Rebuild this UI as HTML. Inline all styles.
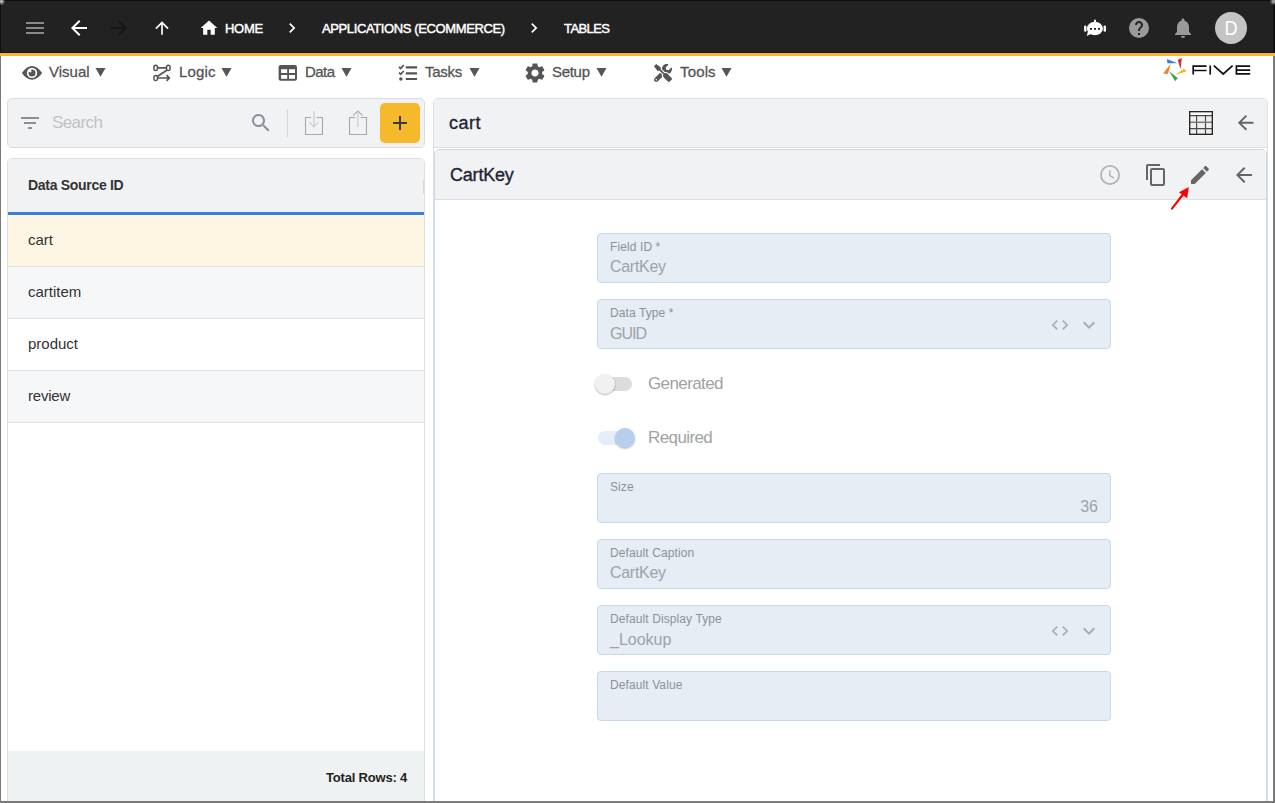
<!DOCTYPE html>
<html><head><meta charset="utf-8">
<style>
*{box-sizing:border-box;margin:0;padding:0}
html,body{width:1275px;height:803px;overflow:hidden;background:#fff;font-family:"Liberation Sans",sans-serif}
.a{position:absolute;white-space:nowrap}
svg.a{overflow:visible}
.crumb{position:absolute;color:#fff;font-size:13px;font-weight:normal;-webkit-text-stroke:0.45px #fff;white-space:nowrap}
.mt{position:absolute;color:#555;font-size:15px;font-weight:normal;-webkit-text-stroke:0.3px #555;white-space:nowrap;letter-spacing:-0.3px}
.row{position:absolute;left:0;width:416px;height:52px;border-bottom:1px solid #e2e2e2}
.rt{position:absolute;left:20px;font-size:15px;color:#333;white-space:nowrap}
.fld{position:absolute;left:597px;width:514px;height:50px;background:#e6edf5;border:1px solid #c7d8ec;border-radius:4px}
.lb{position:absolute;left:12px;font-size:12px;color:#8d9297;white-space:nowrap;letter-spacing:0.1px}
.vl{position:absolute;left:12px;font-size:16px;color:#9ea3a8;white-space:nowrap}
</style></head><body>

<!-- header -->
<div class="a" style="left:0;top:0;width:1275px;height:53px;background:#222"></div>
<div class="a" style="left:0;top:52px;width:1275px;height:1px;background:#151515"></div>
<div class="a" style="left:0;top:53px;width:1275px;height:3px;background:#f8b72b"></div>

<svg class="a" style="left:23px;top:16px" width="24" height="24" viewBox="0 0 24 24"><path fill="#8a8a8a" d="M3 18h18v-2H3v2zm0-5h18v-2H3v2zm0-7v2h18V6H3z"/></svg>
<svg class="a" style="left:67px;top:16px" width="24" height="24" viewBox="0 0 24 24"><path fill="#fff" d="M20 11H7.83l5.59-5.59L12 4l-8 8 8 8 1.41-1.41L7.83 13H20v-2z"/></svg>
<svg class="a" style="left:107px;top:16px" width="24" height="24" viewBox="0 0 24 24"><path fill="#161616" d="M12 4l-1.41 1.41L16.17 11H4v2h12.17l-5.58 5.59L12 20l8-8z"/></svg>
<svg class="a" style="left:152px;top:18px" width="20" height="20" viewBox="0 0 24 24"><path fill="#fff" d="M4 12l1.41 1.41L11 7.83V20h2V7.83l5.58 5.59L20 12l-8-8-8 8z"/></svg>
<svg class="a" style="left:199px;top:17.6px" width="20" height="20" viewBox="0 0 24 24"><path fill="#fff" d="M10 20v-6h4v6h5v-8h3L12 3 2 12h3v8z"/></svg>
<div class="crumb" style="left:225px;top:21px;letter-spacing:-0.3px">HOME</div>
<svg class="a" style="left:282px;top:18px" width="20" height="20" viewBox="0 0 24 24"><path fill="#fff" d="M10 6L8.59 7.41 13.17 12l-4.58 4.59L10 18l6-6z"/></svg>
<div class="crumb" style="left:322px;top:21px;letter-spacing:-0.38px">APPLICATIONS (ECOMMERCE)</div>
<svg class="a" style="left:524px;top:18px" width="20" height="20" viewBox="0 0 24 24"><path fill="#fff" d="M10 6L8.59 7.41 13.17 12l-4.58 4.59L10 18l6-6z"/></svg>
<div class="crumb" style="left:564px;top:21px;letter-spacing:-0.6px">TABLES</div>

<!-- bot icon -->
<svg class="a" style="left:1078px;top:14px" width="34" height="28" viewBox="0 0 34 28">
  <g fill="#fff">
    <ellipse cx="16.9" cy="14.5" rx="8" ry="6.8"/>
    <rect x="16" y="5.6" width="2" height="3" rx="1"/>
    <rect x="6.1" y="11.5" width="2.4" height="6.3" rx="1.2"/>
    <rect x="25.6" y="11.5" width="2.4" height="6.3" rx="1.2"/>
    <path d="M10 17 L8.8 22 L14 19.5 Z"/>
  </g>
  <g fill="#222"><rect x="12" y="14" width="2" height="1.8"/><rect x="16" y="14" width="2" height="1.8"/><rect x="20" y="14" width="2" height="1.8"/></g>
</svg>
<!-- help -->
<svg class="a" style="left:1127px;top:16px" width="24" height="24" viewBox="0 0 24 24"><circle cx="12" cy="12" r="10" fill="#9a9a9a"/><path fill="#222" d="M13 19h-2v-2h2v2zm2.07-7.75l-.9.92C13.45 12.9 13 13.5 13 15h-2v-.5c0-1.1.45-2.1 1.17-2.83l1.24-1.26c.37-.36.59-.86.59-1.41 0-1.1-.9-2-2-2s-2 .9-2 2H8c0-2.21 1.79-4 4-4s4 1.79 4 4c0 .88-.36 1.68-.93 2.25z"/></svg>
<!-- bell -->
<svg class="a" style="left:1171px;top:16px" width="24" height="24" viewBox="0 0 24 24"><path fill="#9a9a9a" d="M12 22c1.1 0 2-.9 2-2h-4c0 1.1.89 2 2 2zm6-6v-5c0-3.07-1.64-5.64-4.5-6.32V4c0-.83-.67-1.5-1.5-1.5s-1.5.67-1.5 1.5v.68C7.63 5.36 6 7.92 6 11v5l-2 2v1h16v-1l-2-2z"/></svg>
<!-- avatar -->
<div class="a" style="left:1215px;top:12px;width:32px;height:32px;border-radius:50%;background:#c4c4c4"></div>
<div class="a" style="left:1215px;top:17px;width:32px;text-align:center;font-size:19.5px;color:#fff;transform:scaleX(0.93)">D</div>

<!-- menu -->
<svg class="a" style="left:18px;top:60px" width="30" height="26" viewBox="0 0 30 26">
  <path fill="#555" d="M3.9 12.9 C7 8.5 10.5 6 14 6 C17.5 6 21 8.5 24.1 12.9 C21 17.3 17.5 19.7 14 19.7 C10.5 19.7 7 17.3 3.9 12.9Z"/>
  <circle cx="14" cy="12.9" r="5.2" fill="#fff"/>
  <circle cx="14" cy="12.9" r="3.5" fill="#555"/>
  <circle cx="12.2" cy="11.1" r="1.3" fill="#fff"/>
</svg>
<div class="mt" style="left:49px;top:63px;letter-spacing:0px">Visual</div>
<svg class="a" style="left:95px;top:68px" width="11" height="9" viewBox="0 0 11 9"><path fill="#555" d="M0.5 0h10L5.5 8.7z"/></svg>

<svg class="a" style="left:150px;top:62px" width="24" height="22" viewBox="0 0 24 22" fill="none" stroke="#555" stroke-width="1.9">
  <ellipse cx="5.7" cy="5.9" rx="1.85" ry="2.6" stroke-width="1.45"/><ellipse cx="18.3" cy="5.9" rx="1.85" ry="2.6" stroke-width="1.45"/>
  <path stroke-width="1.8" d="M7.5 5.9h9M17.2 8.1 L7.2 14.6"/>
  <ellipse cx="5.7" cy="16" rx="1.85" ry="2.6" stroke-width="1.45"/>
  <path stroke-width="1.7" d="M7.5 16h11M16.6 13.1l2.7 2.9-2.7 2.9"/>
</svg>
<div class="mt" style="left:179px;top:63px;letter-spacing:0.15px">Logic</div>
<svg class="a" style="left:221px;top:68px" width="11" height="9" viewBox="0 0 11 9"><path fill="#555" d="M0.5 0h10L5.5 8.7z"/></svg>

<svg class="a" style="left:278px;top:64px" width="20" height="18" viewBox="0 0 20 18">
  <rect x="0.6" y="1" width="18.4" height="15.8" rx="2.2" fill="#555"/>
  <rect x="3.1" y="5.2" width="6.1" height="3.8" fill="#fff"/><rect x="11" y="5.2" width="6" height="3.8" fill="#fff"/>
  <rect x="3.1" y="11" width="6.1" height="3.8" fill="#fff"/><rect x="11" y="11" width="6" height="3.8" fill="#fff"/>
</svg>
<div class="mt" style="left:305px;top:63px;letter-spacing:-0.55px">Data</div>
<svg class="a" style="left:341px;top:68px" width="11" height="9" viewBox="0 0 11 9"><path fill="#555" d="M0.5 0h10L5.5 8.7z"/></svg>

<svg class="a" style="left:396px;top:62px" width="24" height="22" viewBox="0 0 24 22" fill="none" stroke="#555">
  <path stroke-width="1.8" d="M3 4.9l1.6 1.6 3.1-3.3M3 10.7l1.6 1.6 3.1-3.3"/>
  <path stroke-width="2.2" d="M9.8 5.4h11.3M9.8 11.4h11.3M9.8 17h11.3"/>
  <circle cx="4.9" cy="17.1" r="1.75" fill="#555" stroke="none"/>
</svg>
<div class="mt" style="left:425px;top:63px;letter-spacing:-0.3px">Tasks</div>
<svg class="a" style="left:469px;top:68px" width="11" height="9" viewBox="0 0 11 9"><path fill="#555" d="M0.5 0h10L5.5 8.7z"/></svg>

<svg class="a" style="left:522.9px;top:61px" width="24" height="24" viewBox="0 0 24 24"><path fill="#555" d="M19.14 12.94c.04-.3.06-.61.06-.94 0-.32-.02-.64-.07-.94l2.03-1.58c.18-.14.23-.41.12-.61l-1.92-3.32c-.12-.22-.37-.29-.59-.22l-2.39.96c-.5-.38-1.03-.7-1.62-.94l-.36-2.54c-.04-.24-.24-.41-.48-.41h-3.84c-.24 0-.43.17-.47.41l-.36 2.54c-.59.24-1.13.57-1.620.94l-2.39-.96c-.22-.08-.47 0-.59.22L2.74 8.87c-.12.21-.08.47.12.61l2.030 1.58c-.05.3-.09.63-.09.94s.02.64.07.94l-2.03 1.58c-.18.14-.23.41-.12.61l1.92 3.32c.12.22.37.29.59.22l2.39-.96c.5.38 1.03.7 1.62.94l.36 2.54c.05.24.24.41.48.41h3.84c.24 0 .44-.17.47-.41l.36-2.54c.59-.24 1.13-.56 1.62-.94l2.39.96c.22.08.47 0 .59-.22l1.92-3.32c.12-.22.07-.47-.12-.61l-2.01-1.58zM12 15.6c-1.98 0-3.6-1.62-3.6-3.6s1.620-3.6 3.6-3.6 3.6 1.62 3.6 3.6-1.62 3.6-3.6 3.6z"/></svg>
<div class="mt" style="left:552px;top:63px;letter-spacing:-0.3px">Setup</div>
<svg class="a" style="left:596px;top:68px" width="11" height="9" viewBox="0 0 11 9"><path fill="#555" d="M0.5 0h10L5.5 8.7z"/></svg>

<svg class="a" style="left:654px;top:64px" width="18" height="18" viewBox="0 0 512 512"><path fill="#555" d="M501.1 395.7L384 278.6c-23.1-23.1-57.6-27.6-85.4-13.9L192 158.1V96L64 0 0 64l96 128h62.1l106.6 106.6c-13.6 27.8-9.2 62.3 13.9 85.4l117.1 117.1c14.6 14.6 38.2 14.6 52.7 0l52.7-52.7c14.5-14.6 14.5-38.2 0-52.7zM331.7 225c28.3 0 54.9 11 74.9 31l19.4 19.4c15.8-6.9 30.8-16.5 43.8-29.5 37.100-37.1 49.7-89.3 37.9-136.7-2.2-9-13.5-12.1-20.1-5.5l-74.4 74.4-67.9-11.3L334 98.9l74.4-74.4c6.6-6.6 3.4-17.9-5.7-20.2-47.4-11.7-99.6.9-136.6 37.9-28.5 28.5-41.9 66.1-41.2 103.6l82.1 82.1c8.1-1.9 16.5-2.9 24.7-2.9zm-103.9 82l-56.7-56.7L18.7 402.8c-25 25-25 65.5 0 90.5s65.5 25 90.5 0l123.6-123.6c-7.6-19.9-9.9-41.6-5-62.7zM64 472c-13.2 0-24-10.8-24-24 0-13.3 10.7-24 24-24s24 10.7 24 24c0 13.2-10.7 24-24 24z"/></svg>
<div class="mt" style="left:680px;top:63px;letter-spacing:0.15px">Tools</div>
<svg class="a" style="left:721px;top:68px" width="11" height="9" viewBox="0 0 11 9"><path fill="#555" d="M0.5 0h10L5.5 8.7z"/></svg>

<!-- FIVE logo -->
<svg class="a" style="left:1155px;top:54px" width="105" height="36" viewBox="1155 54 105 36">
  <path fill="#3b7ddd" d="M1166.9 58.9 L1177.3 63.2 L1167.4 63.3 Z"/>
  <path fill="#e02b2b" d="M1177.7 59.8 L1181.9 57.9 L1180.5 69.3 Z"/>
  <path fill="#f58025" d="M1170.8 63.8 L1163.1 73.5 L1167.9 73.9 Z"/>
  <path fill="#3aa655" d="M1169 71.2 L1177.8 77.9 L1175.2 81.3 Z"/>
  <path fill="#f6b623" d="M1183.8 68.7 L1186.8 71.3 L1175.5 74.7 Z"/>
  <g fill="none" stroke="#111" stroke-width="1.7">
    <path d="M1193.2 74.6 V66.2 H1206.6 M1193.2 70.5 H1206.6"/>
    <path d="M1210.2 65.5 V74.6"/>
    <path d="M1213.8 65.6 L1223.2 74 L1232.6 65.6"/>
    <path d="M1250.2 66.2 H1236.4 V73.9 H1250.2 M1236.4 70.1 H1250.2"/>
  </g>
</svg>

<!-- left search bar -->
<div class="a" style="left:7px;top:98px;width:418px;height:50px;background:#f1f2f4;border:1px solid #dcdcdc;border-radius:5px"></div>
<svg class="a" style="left:18px;top:111px" width="24" height="24" viewBox="0 0 24 24"><path fill="#89909a" d="M10 18h4v-2h-4v2zM3 6v2h18V6H3zm3 7h12v-2H6v2z"/></svg>
<div class="a" style="left:52px;top:113px;font-size:17px;color:#bfc2c6;letter-spacing:-0.6px">Search</div>
<svg class="a" style="left:249px;top:111px" width="24" height="24" viewBox="0 0 24 24"><path fill="#89909a" d="M15.5 14h-.79l-.28-.27C15.41 12.59 16 11.11 16 9.5 16 5.910 13.09 3 9.5 3S3 5.91 3 9.5 5.91 16 9.5 16c1.61 0 3.09-.59 4.23-1.57l.27.28v.79l5 4.99L20.49 19l-4.99-5zm-6 0C7.01 14 5 11.99 5 9.5S7.01 5 9.5 5 14 7.01 14 9.5 11.99 14 9.5 14z"/></svg>
<div class="a" style="left:287px;top:109px;width:1px;height:28px;background:#d3d6da"></div>
<svg class="a" style="left:300px;top:106px" width="30" height="34" viewBox="0 0 30 34" fill="none">
  <path stroke="#a3a9b0" stroke-width="1.1" d="M11.1 11.5 H5.5 V28.5 H22.5 V11.5 H16.5"/>
  <path stroke="#c8ccd1" stroke-width="1.2" d="M14 5.1 V20.6 M9.3 16.1 L14 20.8 L18.7 16.1"/>
</svg>
<svg class="a" style="left:344px;top:106px" width="30" height="34" viewBox="0 0 30 34" fill="none">
  <path stroke="#a3a9b0" stroke-width="1.1" d="M11.2 11.5 H5.5 V28.5 H22.5 V11.5 H16.6"/>
  <path stroke="#c8ccd1" stroke-width="1.2" d="M13.9 5.6 V20.9"/>
  <path stroke="#a9afb6" stroke-width="1.2" d="M9.1 9.6 L13.9 5.1 L18.5 9.6"/>
</svg>
<div class="a" style="left:380px;top:103px;width:40px;height:40px;background:#f7b92c;border-radius:5px"></div>
<svg class="a" style="left:392px;top:115px" width="16" height="16" viewBox="0 0 16 16"><path stroke="#3a3a3a" stroke-width="2" d="M8 1V15M1 8H15"/></svg>

<!-- left table -->
<div class="a" style="left:7px;top:158px;width:418px;height:645px;border:1px solid #dfdfdf;border-radius:5px 5px 0 0;background:#fff;overflow:hidden">
  <div class="a" style="left:0;top:0;width:416px;height:53px;background:#f1f2f4"></div>
  <div class="a" style="left:0;top:53px;width:416px;height:3px;background:#3a80d8"></div>
  <div class="a" style="left:415px;top:21px;width:1px;height:14px;background:#d5d8dc"></div>
  <div class="a" style="left:20px;top:18px;font-size:14px;font-weight:bold;color:#333;letter-spacing:-0.3px">Data Source ID</div>
  <div class="row" style="top:56px;height:52px;background:#fff5e3"><div class="rt" style="top:16px">cart</div></div>
  <div class="row" style="top:108px;background:#f6f7f9"><div class="rt" style="top:16px">cartitem</div></div>
  <div class="row" style="top:160px;background:#fff"><div class="rt" style="top:16px">product</div></div>
  <div class="row" style="top:212px;background:#f6f7f9"><div class="rt" style="top:16px;letter-spacing:-0.2px">review</div></div>
  <div class="a" style="left:0;top:592px;width:416px;height:51px;background:#eff2f3"></div>
  <div class="a" style="right:17px;top:611px;font-size:13px;font-weight:bold;color:#222;letter-spacing:-0.2px">Total Rows: 4</div>
</div>

<!-- right header -->
<div class="a" style="left:433px;top:98px;width:835px;height:720px;background:#fff;border:1px solid #dedede;border-radius:5px 5px 0 0"></div>
<div class="a" style="left:434px;top:99px;width:833px;height:48px;background:#f1f2f4;border-radius:4px 4px 0 0"></div>
<div class="a" style="left:434px;top:147px;width:833px;height:1px;background:#dedede"></div>
<div class="a" style="left:449px;top:113px;font-size:18px;font-weight:normal;-webkit-text-stroke:0.35px #1d2433;color:#1d2433;letter-spacing:0.5px">cart</div>
<svg class="a" style="left:1188px;top:110px" width="26" height="26" viewBox="0 0 26 26">
  <rect x="0" y="0" width="26" height="26" fill="#fff"/>
  <rect x="1.7" y="1.7" width="22.6" height="22.6" fill="#efefef"/>
  <rect x="1.7" y="1.7" width="22.6" height="4" fill="#fff"/>
  <g stroke="#4a4a4a" stroke-width="1.2"><path d="M1.5 5.6H24.5M1.5 18.6H24.5M8.6 5.6V24.5M17.5 5.6V24.5"/></g>
  <path d="M1.5 12.3H24.5" stroke="#7a7a7a" stroke-width="1.5"/>
  <rect x="1.65" y="1.65" width="22.7" height="22.7" fill="none" stroke="#262626" stroke-width="1.4"/>
</svg>
<svg class="a" style="left:1233.5px;top:111.3px" width="23.4" height="23.4" viewBox="0 0 24 24"><path fill="#666" d="M20 11H7.83l5.59-5.59L12 4l-8 8 8 8 1.41-1.41L7.83 13H20v-2z"/></svg>

<!-- card -->
<div class="a" style="left:434px;top:149px;width:833px;height:660px;border:1px solid #c9dbeb;border-radius:5px;background:#fff;overflow:hidden">
  <div class="a" style="left:0;top:0;width:831px;height:50px;background:#f1f2f4;border-bottom:1px solid #dde0e4"></div>
  <div class="a" style="left:15px;top:15px;font-size:18px;font-weight:normal;-webkit-text-stroke:0.35px #1d2433;color:#1d2433;letter-spacing:-0.2px">CartKey</div>
</div>
<svg class="a" style="left:1098px;top:163px" width="24" height="24" viewBox="0 0 24 24"><circle cx="12" cy="12" r="9.1" fill="none" stroke="#b3b3b3" stroke-width="1.8"/><path d="M11.8 7.2V12.6L16.2 15.2" fill="none" stroke="#b3b3b3" stroke-width="1.5"/></svg>
<svg class="a" style="left:1144px;top:163px" width="24" height="24" viewBox="0 0 24 24"><path fill="#666" d="M16 1H4c-1.1 0-2 .9-2 2v14h2V3h12V1zm3 4H8c-1.1 0-2 .9-2 2v14c0 1.1.9 2 2 2h11c1.1 0 2-.9 2-2V7c0-1.1-.9-2-2-2zm0 16H8V7h11v14z"/></svg>
<svg class="a" style="left:1188px;top:163px" width="24" height="24" viewBox="0 0 24 24"><path fill="#666" d="M3 17.25V21h3.75L17.81 9.94l-3.75-3.75L3 17.25zM20.71 7.04c.39-.39.39-1.02 0-1.41l-2.34-2.34c-.39-.39-1.02-.39-1.41 0l-1.83 1.83 3.75 3.75 1.83-1.83z"/></svg>
<svg class="a" style="left:1232px;top:163px" width="24" height="24" viewBox="0 0 24 24"><path fill="#666" d="M20 11H7.83l5.59-5.59L12 4l-8 8 8 8 1.41-1.41L7.83 13H20v-2z"/></svg>
<!-- red arrow -->
<svg class="a" style="left:1160px;top:180px" width="40" height="40" viewBox="1160 180 40 40">
  <path d="M1172 208.6 L1182.5 195" stroke="#f00" stroke-width="2.2" stroke-linecap="round"/>
  <path d="M1188.8 187 L1179 192.3 L1187.2 198.2 Z" fill="#f00"/>
</svg>

<!-- form -->
<div class="fld" style="top:233px"><div class="lb" style="top:6px">Field ID *</div><div class="vl" style="top:24px;letter-spacing:-0.3px">CartKey</div></div>
<div class="fld" style="top:299px"><div class="lb" style="top:6px">Data Type *</div><div class="vl" style="top:25px;letter-spacing:-1px">GUID</div>
  <svg class="a" style="left:452.3px;top:15px" width="20" height="20" viewBox="0 0 24 24"><path fill="#a8adb3" d="M9.4 16.6L4.8 12l4.6-4.6L8 6l-6 6 6 6 1.4-1.4zm5.2 0l4.6-4.6-4.6-4.6L16 6l6 6-6 6-1.4-1.4z"/></svg>
  <svg class="a" style="left:479px;top:13px" width="24" height="24" viewBox="0 0 24 24"><path fill="#a8adb3" d="M16.59 8.59L12 13.17 7.41 8.59 6 10l6 6 6-6z"/></svg>
</div>

<!-- toggles -->
<div class="a" style="left:598px;top:377px;width:34px;height:14px;border-radius:7px;background:#dcdcdc"></div>
<div class="a" style="left:595px;top:374px;width:20px;height:20px;border-radius:50%;background:#f1f1f1;box-shadow:0 1px 2px rgba(0,0,0,.3)"></div>
<div class="a" style="left:648px;top:374px;font-size:17px;color:#a2a2a2;letter-spacing:-0.6px">Generated</div>
<div class="a" style="left:598px;top:431px;width:34px;height:14px;border-radius:7px;background:#e4edf8"></div>
<div class="a" style="left:615px;top:428px;width:20px;height:20px;border-radius:50%;background:#b6cfee;box-shadow:0 1px 2px rgba(0,0,0,.25)"></div>
<div class="a" style="left:648px;top:428px;font-size:17px;color:#a2a2a2;letter-spacing:-0.6px">Required</div>

<div class="fld" style="top:473px"><div class="lb" style="top:6px">Size</div><div class="vl" style="top:24px;left:auto;right:12px">36</div></div>
<div class="fld" style="top:539px"><div class="lb" style="top:6px">Default Caption</div><div class="vl" style="top:24px;letter-spacing:-0.3px">CartKey</div></div>
<div class="fld" style="top:605px"><div class="lb" style="top:6px">Default Display Type</div><div class="vl" style="top:25px">_Lookup</div>
  <svg class="a" style="left:452.3px;top:15px" width="20" height="20" viewBox="0 0 24 24"><path fill="#a8adb3" d="M9.4 16.6L4.8 12l4.6-4.6L8 6l-6 6 6 6 1.4-1.4zm5.2 0l4.6-4.6-4.6-4.6L16 6l6 6-6 6-1.4-1.4z"/></svg>
  <svg class="a" style="left:479px;top:13px" width="24" height="24" viewBox="0 0 24 24"><path fill="#a8adb3" d="M16.59 8.59L12 13.17 7.41 8.59 6 10l6 6 6-6z"/></svg>
</div>
<div class="fld" style="top:671px"><div class="lb" style="top:6px">Default Value</div></div>

<!-- frame -->
<div class="a" style="left:0;top:0;width:1275px;height:1px;background:#101010"></div>
<div class="a" style="left:0;top:0;width:1px;height:53px;background:#101010"></div>
<div class="a" style="left:1273px;top:0;width:2px;height:53px;background:#101010"></div>
<div class="a" style="left:0;top:56px;width:1px;height:747px;background:#7a7a7a"></div>
<div class="a" style="left:1273px;top:56px;width:2px;height:747px;background:#7a7a7a"></div>
<div class="a" style="left:0;top:801px;width:1275px;height:2px;background:#7a7a7a"></div>
<div class="a" style="left:0;top:0;width:5px;height:5px;background:radial-gradient(circle at 1.5px 1.5px,#f0f0f0 0,#999 1.2px,rgba(120,120,120,.6) 2.5px,rgba(34,34,34,0) 4px)"></div>
<div class="a" style="left:1270px;top:0;width:5px;height:5px;background:radial-gradient(circle at 3.5px 1.5px,#aaa 0,#888 1.5px,rgba(120,120,120,.5) 2.5px,rgba(34,34,34,0) 4px)"></div>
</body></html>
